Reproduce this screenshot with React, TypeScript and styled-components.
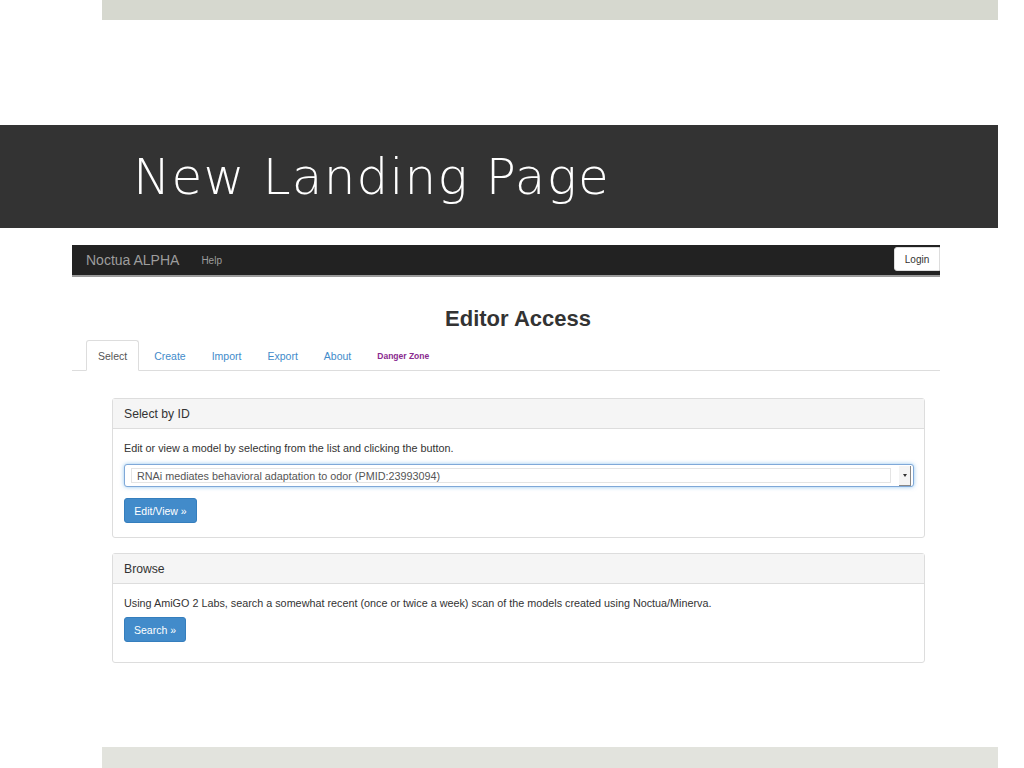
import React from "react";
import styled, { createGlobalStyle } from "styled-components";

const Global = createGlobalStyle`
  html, body { margin: 0; padding: 0; background: #fff; }
  body { width: 1024px; height: 768px; overflow: hidden; font-family: "Liberation Sans", Arial, sans-serif; }
`;

const Slide = styled.div`
  width: 1024px;
  height: 768px;
  display: flex;
  flex-direction: column;
  background: #fff;
`;

const Band = styled.div<{ $color: string; $h: number; $mt: number }>`
  margin-left: 102px;
  width: 896px;
  height: ${(p) => p.$h}px;
  margin-top: ${(p) => p.$mt}px;
  background: ${(p) => p.$color};
  flex-shrink: 0;
`;

const TitleBar = styled.div`
  margin-top: 105px;
  width: 998px;
  height: 103px;
  background: #333333;
  display: flex;
  align-items: center;
  padding-left: 133px;
  box-sizing: border-box;
  flex-shrink: 0;
`;

const Title = styled.h1`
  margin: 0;
  color: #fff;
  font-family: "DejaVu Sans", "Lato", sans-serif;
  font-weight: 200;
  font-size: 50px;
  letter-spacing: 1.2px;
`;

const Shot = styled.div`
  margin-top: 17px;
  margin-left: 72px;
  width: 868px;
  height: 502px;
  display: flex;
  flex-direction: column;
  flex-shrink: 0;
`;

const NavBar = styled.div`
  height: 32px;
  background: #222222;
  border-bottom: 2px solid #9a9a9a;
  display: flex;
  align-items: center;
  padding-left: 14px;
  box-sizing: border-box;
  position: relative;
`;

const Brand = styled.span`
  color: #9d9d9d;
  font-size: 14px;
  margin-right: 22px;
`;

const NavLink = styled.span`
  color: #9d9d9d;
  font-size: 10px;
`;

const LoginBtn = styled.div`
  position: absolute;
  right: 0;
  top: 2px;
  width: 46px;
  height: 24px;
  background: #fff;
  border: 1px solid #ddd;
  border-radius: 3px 0 0 3px;
  font-size: 10px;
  color: #333;
  display: flex;
  align-items: center;
  justify-content: center;
  box-sizing: border-box;
`;

const Heading = styled.h2`
  margin: 29px 0 0;
  text-align: center;
  font-size: 22px;
  font-weight: bold;
  color: #333;
  padding-left: 24px;
  line-height: 26px;
`;

const Tabs = styled.div`
  margin-top: 7px;
  display: flex;
  align-items: flex-end;
  border-bottom: 1px solid #ddd;
  padding-left: 14px;
  height: 31px;
`;

const Tab = styled.div<{ $active?: boolean; $danger?: boolean }>`
  height: 31px;
  box-sizing: border-box;
  padding: 0 ${(p) => (p.$active ? 11 : 7)}px;
  margin-right: ${(p) => (p.$active ? 7 : 10)}px;
  display: flex;
  align-items: center;
  font-size: ${(p) => (p.$danger ? 8.5 : 10.5)}px;
  font-weight: ${(p) => (p.$danger ? "bold" : "normal")};
  color: ${(p) => (p.$active ? "#555" : p.$danger ? "#8a2a8f" : "#428bca")};
  background: ${(p) => (p.$active ? "#fff" : "transparent")};
  border: 1px solid ${(p) => (p.$active ? "#ddd" : "transparent")};
  border-bottom-color: ${(p) => (p.$active ? "#fff" : "transparent")};
  border-radius: 3px 3px 0 0;
  margin-bottom: -1px;
`;

const Panel = styled.div<{ $mt: number; $h: number }>`
  margin-top: ${(p) => p.$mt}px;
  margin-left: 40px;
  width: 813px;
  height: ${(p) => p.$h}px;
  border: 1px solid #ddd;
  border-radius: 3px;
  box-sizing: border-box;
  display: flex;
  flex-direction: column;
`;

const PanelHead = styled.div`
  height: 29px;
  background: #f5f5f5;
  border-bottom: 1px solid #ddd;
  display: flex;
  align-items: center;
  padding-left: 11px;
  font-size: 12.2px;
  color: #333;
  flex-shrink: 0;
`;

const PanelBody = styled.div`
  padding: 12px 11px 0;
  display: flex;
  flex-direction: column;
  align-items: flex-start;
`;

const Para = styled.p`
  margin: 0;
  font-size: 10.8px;
  color: #333;
  line-height: 14px;
`;

const SelectBox = styled.div`
  margin-top: 9px;
  width: 790px;
  height: 23px;
  border: 1px solid #7fa8d8;
  box-shadow: 0 0 4px rgba(102, 175, 233, 0.7);
  border-radius: 3px;
  box-sizing: border-box;
  display: flex;
  align-items: center;
  padding: 0 2px 0 6px;
  background: #fff;
`;

const SelectField = styled.div`
  flex: 1;
  height: 15px;
  border: 1px solid #e4e4e4;
  display: flex;
  align-items: center;
  padding-left: 5px;
  font-size: 10.8px;
  color: #555;
  box-sizing: border-box;
`;

const Arrow = styled.div`
  width: 11px;
  height: 19px;
  margin-left: 8px;
  border-right: 1px solid #888;
  border-bottom: 1px solid #888;
  background: #f4f4f4;
  display: flex;
  align-items: center;
  justify-content: center;
  &::after {
    content: "";
    border-left: 2px solid transparent;
    border-right: 2px solid transparent;
    border-top: 3px solid #333;
  }
`;

const Btn = styled.div<{ $w: number; $mt: number }>`
  margin-top: ${(p) => p.$mt}px;
  width: ${(p) => p.$w}px;
  height: 25px;
  background: #428bca;
  border: 1px solid #357ebd;
  border-radius: 3px;
  box-sizing: border-box;
  color: #fff;
  font-size: 10.5px;
  display: flex;
  align-items: center;
  justify-content: center;
`;

export default function App() {
  return (
    <>
      <Global />
      <Slide>
        <Band $color="#d6d8cf" $h={20} $mt={0} />
        <TitleBar>
          <Title>New Landing Page</Title>
        </TitleBar>
        <Shot>
          <NavBar>
            <Brand>Noctua ALPHA</Brand>
            <NavLink>Help</NavLink>
            <LoginBtn>Login</LoginBtn>
          </NavBar>
          <Heading>Editor Access</Heading>
          <Tabs>
            <Tab $active>Select</Tab>
            <Tab>Create</Tab>
            <Tab>Import</Tab>
            <Tab>Export</Tab>
            <Tab>About</Tab>
            <Tab $danger>Danger Zone</Tab>
          </Tabs>
          <Panel $mt={27} $h={140}>
            <PanelHead>Select by ID</PanelHead>
            <PanelBody>
              <Para>Edit or view a model by selecting from the list and clicking the button.</Para>
              <SelectBox>
                <SelectField>RNAi mediates behavioral adaptation to odor (PMID:23993094)</SelectField>
                <Arrow />
              </SelectBox>
              <Btn $w={73} $mt={11}>Edit/View »</Btn>
            </PanelBody>
          </Panel>
          <Panel $mt={15} $h={110}>
            <PanelHead>Browse</PanelHead>
            <PanelBody>
              <Para>Using AmiGO 2 Labs, search a somewhat recent (once or twice a week) scan of the models created using Noctua/Minerva.</Para>
              <Btn $w={62} $mt={7}>Search »</Btn>
            </PanelBody>
          </Panel>
        </Shot>
        <Band $color="#e2e3dd" $h={21} $mt={0} />
      </Slide>
    </>
  );
}
